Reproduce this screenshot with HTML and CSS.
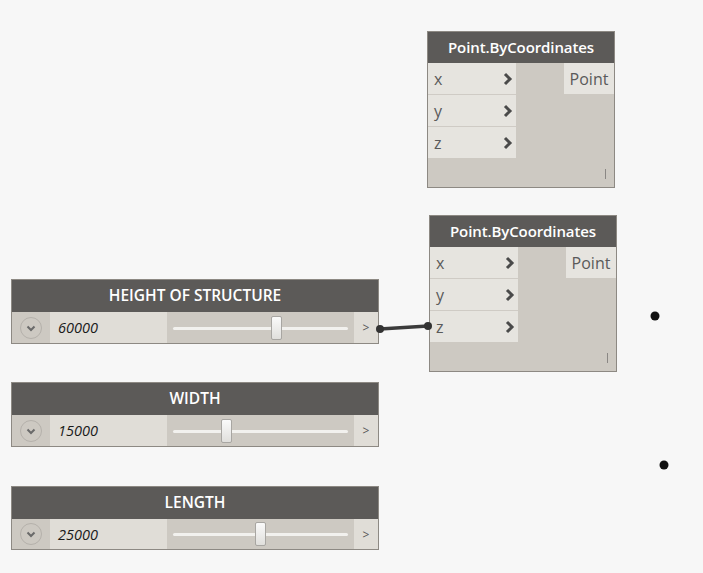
FILE: index.html
```html
<!DOCTYPE html>
<html>
<head>
<meta charset="utf-8">
<link rel="stylesheet" href="styles.css">
</head>
<body>
<div class="canvas">
  <svg class="wires" width="703" height="573" viewBox="0 0 703 573">
    <line x1="380" y1="329" x2="428" y2="326" stroke="#3b3b3b" stroke-width="3.5"/>
    <circle cx="380" cy="329" r="4" fill="#333"/>
    <circle cx="428" cy="326" r="4" fill="#333"/>
    <circle cx="655" cy="316" r="4.5" fill="#111"/>
    <circle cx="664" cy="465" r="4.5" fill="#111"/>
  </svg>

  <div class="node pt pt1">
    <div class="node-head">Point.ByCoordinates</div>
    <div class="node-body">
      <div class="ports">
        <div class="port"><span>x</span><svg class="chev" width="10" height="14" viewBox="0 0 10 14"><path d="M2 2 L7 7 L2 12" fill="none" stroke="#4a4a4a" stroke-width="3"/></svg></div>
        <div class="port"><span>y</span><svg class="chev" width="10" height="14" viewBox="0 0 10 14"><path d="M2 2 L7 7 L2 12" fill="none" stroke="#4a4a4a" stroke-width="3"/></svg></div>
        <div class="port"><span>z</span><svg class="chev" width="10" height="14" viewBox="0 0 10 14"><path d="M2 2 L7 7 L2 12" fill="none" stroke="#4a4a4a" stroke-width="3"/></svg></div>
      </div>
      <div class="outs"><div class="out">Point</div></div>
      <div class="lace"></div>
    </div>
  </div>

  <div class="node pt pt2">
    <div class="node-head">Point.ByCoordinates</div>
    <div class="node-body">
      <div class="ports">
        <div class="port"><span>x</span><svg class="chev" width="10" height="14" viewBox="0 0 10 14"><path d="M2 2 L7 7 L2 12" fill="none" stroke="#4a4a4a" stroke-width="3"/></svg></div>
        <div class="port"><span>y</span><svg class="chev" width="10" height="14" viewBox="0 0 10 14"><path d="M2 2 L7 7 L2 12" fill="none" stroke="#4a4a4a" stroke-width="3"/></svg></div>
        <div class="port"><span>z</span><svg class="chev" width="10" height="14" viewBox="0 0 10 14"><path d="M2 2 L7 7 L2 12" fill="none" stroke="#4a4a4a" stroke-width="3"/></svg></div>
      </div>
      <div class="outs"><div class="out">Point</div></div>
      <div class="lace"></div>
    </div>
  </div>

  <div class="node slider s1">
    <div class="node-head">HEIGHT OF STRUCTURE</div>
    <div class="slider-body">
      <div class="btn"><svg width="24" height="24" viewBox="0 0 24 24"><circle cx="12" cy="12" r="10.5" fill="none" stroke="#b5b1ab" stroke-width="1"/><path d="M8.5 10.5 L12 14 L15.5 10.5" fill="none" stroke="#6a6a6a" stroke-width="2"/></svg></div>
      <div class="val">60000</div>
      <div class="track"><div class="rail"></div><div class="thumb" style="left: 104px"></div></div>
      <div class="more">&gt;</div>
    </div>
  </div>

  <div class="node slider s2">
    <div class="node-head">WIDTH</div>
    <div class="slider-body">
      <div class="btn"><svg width="24" height="24" viewBox="0 0 24 24"><circle cx="12" cy="12" r="10.5" fill="none" stroke="#b5b1ab" stroke-width="1"/><path d="M8.5 10.5 L12 14 L15.5 10.5" fill="none" stroke="#6a6a6a" stroke-width="2"/></svg></div>
      <div class="val">15000</div>
      <div class="track"><div class="rail"></div><div class="thumb" style="left: 54px"></div></div>
      <div class="more">&gt;</div>
    </div>
  </div>

  <div class="node slider s3">
    <div class="node-head">LENGTH</div>
    <div class="slider-body">
      <div class="btn"><svg width="24" height="24" viewBox="0 0 24 24"><circle cx="12" cy="12" r="10.5" fill="none" stroke="#b5b1ab" stroke-width="1"/><path d="M8.5 10.5 L12 14 L15.5 10.5" fill="none" stroke="#6a6a6a" stroke-width="2"/></svg></div>
      <div class="val">25000</div>
      <div class="track"><div class="rail"></div><div class="thumb" style="left: 88px"></div></div>
      <div class="more">&gt;</div>
    </div>
  </div>
</div>
</body>
</html>
```
FILE: styles.css
```css
html, body {
  margin: 0;
  padding: 0;
  background: #f7f7f7;
}
.canvas {
  position: relative;
  width: 703px;
  height: 573px;
  overflow: hidden;
  font-family: "Open Sans", "Noto Sans", sans-serif;
}
.wires {
  position: absolute;
  left: 0;
  top: 0;
  z-index: 2;
}
.node {
  position: absolute;
  box-sizing: border-box;
  border: 1px solid #8d8983;
  background: #cdc9c2;
  display: flex;
  flex-direction: column;
  z-index: 1;
}
.node-head {
  background: #5c5a58;
  color: #fff;
  font-weight: 600;
  font-size: 15px;
  letter-spacing: -0.1px;
  display: flex;
  align-items: center;
  justify-content: center;
  height: 31px;
  padding-bottom: 2px;
  box-sizing: border-box;
  flex: none;
}
.pt { width: 188px; height: 157px; }
.pt1 { left: 427px; top: 31px; }
.pt2 { left: 429px; top: 215px; }
.node-body {
  flex: 1;
  display: flex;
  position: relative;
}
.ports {
  width: 88px;
  display: flex;
  flex-direction: column;
}
.port {
  height: 31px;
  background: #e6e4df;
  border-bottom: 1px solid #cfcbc5;
  display: flex;
  align-items: center;
  justify-content: space-between;
  padding: 0 3px 0 6px;
  color: #5a5a5a;
  font-size: 16px;
}
.port:last-child { border-bottom: none; }
.port span { margin-top: 0; }
.outs {
  flex: 1;
  display: flex;
  justify-content: flex-end;
  align-items: flex-start;
}
.out {
  width: 50px;
  height: 31px;
  box-sizing: border-box;
  background: #e6e4df;
  color: #5a5a5a;
  font-size: 16px;
  display: flex;
  align-items: center;
  justify-content: center;
  padding-bottom: 0;
}
.lace {
  position: absolute;
  right: 8px;
  bottom: 8px;
  width: 1px;
  height: 10px;
  background: #8a8784;
}
.slider { left: 11px; width: 368px; height: 65px; }
.s1 { top: 279px; }
.s2 { top: 382px; }
.s3 { top: 486px; height: 64px; }
.slider .node-head { height: 32px; font-size: 15.5px; letter-spacing: 0; }
.slider-body {
  flex: 1;
  display: flex;
  align-items: stretch;
}
.btn {
  width: 38px;
  display: flex;
  align-items: center;
  justify-content: center;
}
.val {
  width: 117px;
  background: #e0ddd7;
  font-style: italic;
  font-size: 14.5px;
  color: #1a1a1a;
  display: flex;
  align-items: center;
  padding-left: 8px;
  box-sizing: border-box;
}
.track {
  flex: 1;
  position: relative;
}
.rail {
  position: absolute;
  left: 6px;
  right: 6px;
  top: 50%;
  height: 3px;
  margin-top: -1px;
  background: #f2f1ee;
  border-radius: 2px;
}
.thumb {
  position: absolute;
  top: 50%;
  width: 11px;
  height: 24px;
  margin-top: -12px;
  box-sizing: border-box;
  background: linear-gradient(#fafafa, #e0dfdc);
  border: 1px solid #a8a6a2;
  border-radius: 2px;
}
.more {
  width: 24px;
  background: #e0ddd7;
  color: #555;
  font-size: 12px;
  display: flex;
  align-items: center;
  justify-content: center;
}
```
